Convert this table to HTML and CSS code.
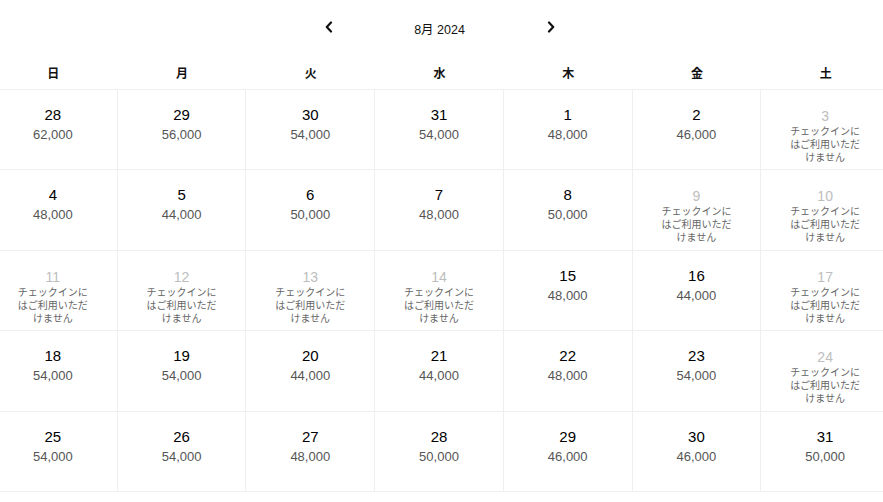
FILE: index.html
```html
<!DOCTYPE html>
<html lang="ja">
<head>
<meta charset="utf-8">
<link rel="stylesheet" href="styles.css">
</head>
<body>
<div class="cal">
  <div class="nav">
    <button class="arrow" aria-label="前の月"><svg width="10" height="12" viewBox="0 0 10 12"><path d="M7 1.5 L2.8 6 L7 10.5" fill="none" stroke="#111" stroke-width="2.2" stroke-linecap="round" stroke-linejoin="round"/></svg></button>
    <div class="title">8月 2024</div>
    <button class="arrow" aria-label="次の月"><svg width="10" height="12" viewBox="0 0 10 12"><path d="M3 1.5 L7.2 6 L3 10.5" fill="none" stroke="#111" stroke-width="2.2" stroke-linecap="round" stroke-linejoin="round"/></svg></button>
  </div>
  <div class="dows">
    <div>日</div><div>月</div><div>火</div><div>水</div><div>木</div><div>金</div><div>土</div>
  </div>
  <div class="grid">
    <div class="cell"><div class="d">28</div><div class="p">62,000</div></div>
    <div class="cell"><div class="d">29</div><div class="p">56,000</div></div>
    <div class="cell"><div class="d">30</div><div class="p">54,000</div></div>
    <div class="cell"><div class="d">31</div><div class="p">54,000</div></div>
    <div class="cell"><div class="d">1</div><div class="p">48,000</div></div>
    <div class="cell"><div class="d">2</div><div class="p">46,000</div></div>
    <div class="cell off"><div class="d">3</div><div class="n">チェックインにはご利用いただけません</div></div>

    <div class="cell"><div class="d">4</div><div class="p">48,000</div></div>
    <div class="cell"><div class="d">5</div><div class="p">44,000</div></div>
    <div class="cell"><div class="d">6</div><div class="p">50,000</div></div>
    <div class="cell"><div class="d">7</div><div class="p">48,000</div></div>
    <div class="cell"><div class="d">8</div><div class="p">50,000</div></div>
    <div class="cell off"><div class="d">9</div><div class="n">チェックインにはご利用いただけません</div></div>
    <div class="cell off"><div class="d">10</div><div class="n">チェックインにはご利用いただけません</div></div>

    <div class="cell off"><div class="d">11</div><div class="n">チェックインにはご利用いただけません</div></div>
    <div class="cell off"><div class="d">12</div><div class="n">チェックインにはご利用いただけません</div></div>
    <div class="cell off"><div class="d">13</div><div class="n">チェックインにはご利用いただけません</div></div>
    <div class="cell off"><div class="d">14</div><div class="n">チェックインにはご利用いただけません</div></div>
    <div class="cell"><div class="d">15</div><div class="p">48,000</div></div>
    <div class="cell"><div class="d">16</div><div class="p">44,000</div></div>
    <div class="cell off"><div class="d">17</div><div class="n">チェックインにはご利用いただけません</div></div>

    <div class="cell"><div class="d">18</div><div class="p">54,000</div></div>
    <div class="cell"><div class="d">19</div><div class="p">54,000</div></div>
    <div class="cell"><div class="d">20</div><div class="p">44,000</div></div>
    <div class="cell"><div class="d">21</div><div class="p">44,000</div></div>
    <div class="cell"><div class="d">22</div><div class="p">48,000</div></div>
    <div class="cell"><div class="d">23</div><div class="p">54,000</div></div>
    <div class="cell off"><div class="d">24</div><div class="n">チェックインにはご利用いただけません</div></div>

    <div class="cell"><div class="d">25</div><div class="p">54,000</div></div>
    <div class="cell"><div class="d">26</div><div class="p">54,000</div></div>
    <div class="cell"><div class="d">27</div><div class="p">48,000</div></div>
    <div class="cell"><div class="d">28</div><div class="p">50,000</div></div>
    <div class="cell"><div class="d">29</div><div class="p">46,000</div></div>
    <div class="cell"><div class="d">30</div><div class="p">46,000</div></div>
    <div class="cell"><div class="d">31</div><div class="p">50,000</div></div>
  </div>
</div>
</body>
</html>
```
FILE: styles.css
```css
html, body {
  margin: 0;
  padding: 0;
  background: #fff;
  overflow: hidden;
}
body {
  font-family: "Liberation Sans", "Noto Sans CJK JP", sans-serif;
  color: #111;
}
.cal {
  width: 901px;
  margin-left: -11px;
}
.nav {
  display: flex;
  justify-content: center;
  align-items: center;
  height: 56px;
}
.arrow {
  background: none;
  border: 0;
  padding: 0;
  width: 24px;
  height: 24px;
  display: flex;
  align-items: center;
  justify-content: center;
  margin-top: -3px;
}
.title {
  width: 198px;
  text-align: center;
  font-size: 12.5px;
  line-height: 16px;
  margin-top: 3px;
  color: #111;
}
.dows {
  display: grid;
  grid-template-columns: repeat(7, 1fr);
  height: 33px;
  font-size: 12px;
  font-weight: bold;
  text-align: center;
  line-height: 16px;
  padding-top: 10px;
  box-sizing: border-box;
}
.grid {
  display: grid;
  grid-template-columns: repeat(7, 1fr);
  grid-auto-rows: 80.4px;
  border-top: 1px solid #efefef;
}
.cell {
  border-right: 1px solid #efefef;
  border-bottom: 1px solid #efefef;
  box-sizing: border-box;
  display: flex;
  flex-direction: column;
  align-items: center;
  padding-top: 16px;
  text-align: center;
}
.d {
  font-size: 15px;
  line-height: 18px;
  color: #000;
}
.p {
  font-size: 13px;
  line-height: 18px;
  margin-top: 2px;
  color: #555;
}
.off .d {
  font-size: 14px;
  color: #bdbdbd;
  margin-top: 1px;
}
.n {
  font-size: 10px;
  line-height: 13px;
  color: #666;
  width: 72px;
}
```
